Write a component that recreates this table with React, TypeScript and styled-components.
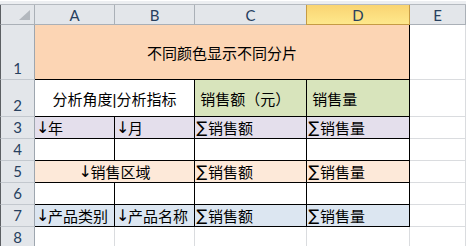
import React from 'react';
import styled, { createGlobalStyle } from 'styled-components';

const GlobalStyle = createGlobalStyle`
  html, body {
    margin: 0;
    padding: 0;
    background: #ffffff;
    overflow: hidden;
  }
`;

const Sheet = styled.div`
  width: 466px;
  height: 246px;
  overflow: hidden;
  background: #ffffff;
`;

const TopStrip = styled.div`
  height: 5px;
  box-sizing: border-box;
  background: #eceef1;
  border-top: 1px solid #ffffff;
  border-bottom: 1px solid #b5bac0;
`;

const Grid = styled.div`
  display: grid;
  grid-template-columns: 35px 80px 80px 112px 103px 1fr;
  grid-template-rows: 20px 55px 37px repeat(6, 22px);
`;

const Corner = styled.div`
  box-sizing: border-box;
  background: #e3e6ea;
  border-left: 1px solid #5c5f63;
  border-right: 1px solid #aab0b7;
  border-bottom: 1px solid #aab0b7;
  display: flex;
  align-items: flex-end;
  justify-content: flex-end;
  padding: 0 4px 4px 0;
`;

const ColHeader = styled.div<{ $selected?: boolean }>`
  box-sizing: border-box;
  position: relative;
  display: flex;
  align-items: center;
  justify-content: center;
  font-family: Lato, 'Liberation Sans', sans-serif;
  font-size: 15px;
  color: #27405e;
  background: ${p => (p.$selected ? 'linear-gradient(#f9d472, #fee88c)' : '#e3e6ea')};
  border-right: 1px solid ${p => (p.$selected ? '#c59b45' : '#aab0b7')};
  border-bottom: 1px solid ${p => (p.$selected ? '#c59b45' : '#aab0b7')};
  box-shadow: ${p => (p.$selected ? '-1px 0 0 #c59b45' : 'none')};
`;

const RowHeader = styled.div`
  box-sizing: border-box;
  display: flex;
  align-items: flex-end;
  justify-content: center;
  padding-bottom: 1px;
  font-family: Lato, 'Liberation Sans', sans-serif;
  font-size: 15px;
  line-height: 20px;
  color: #27405e;
  background: #e3e6ea;
  border-left: 1px solid #5c5f63;
  border-right: 1px solid #9ea6af;
  border-bottom: 1px solid #c3c8ce;
`;

const Cell = styled.div<{ $bg?: string; $boxed?: boolean; $span?: number; $center?: boolean }>`
  box-sizing: border-box;
  grid-column: span ${p => p.$span ?? 1};
  display: flex;
  align-items: center;
  justify-content: ${p => (p.$center ? 'center' : 'flex-start')};
  padding: 0 1px;
  white-space: nowrap;
  overflow: hidden;
  font-family: 'Liberation Sans', 'Noto Sans CJK SC', sans-serif;
  font-size: 15px;
  color: #000000;
  background: ${p => p.$bg ?? '#ffffff'};
  border-right: 1px solid ${p => (p.$boxed ? '#000000' : '#dadcdf')};
  border-bottom: 1px solid ${p => (p.$boxed ? '#000000' : '#dadcdf')};
`;

// ↓ and ∑ markers: narrow, full-height glyphs
const Sym = styled.span`
  display: inline-block;
  width: 12px;
  text-align: center;
  font-family: 'DejaVu Sans', sans-serif;
  font-size: 16px;
  color: #000000;
`;

const colors = {
  title: '#fcd5b4',
  green: '#d8e4bc',
  purple: '#e4dfec',
  peach: '#fde9d9',
  blue: '#dce6f1',
};

const SelectAll = () => (
  <svg width="11" height="10" viewBox="0 0 11 10">
    <polygon points="11,0 11,10 0,10" fill="#b3b8be" />
  </svg>
);

const Dim = ({ children }: { children: React.ReactNode }) => (
  <>
    <Sym>↓</Sym>
    {children}
  </>
);

const Sum = ({ children }: { children: React.ReactNode }) => (
  <>
    <Sym>∑</Sym>
    {children}
  </>
);

export default function App() {
  return (
    <Sheet>
      <GlobalStyle />
      <TopStrip />
      <Grid>
        <Corner>
          <SelectAll />
        </Corner>
        <ColHeader>A</ColHeader>
        <ColHeader>B</ColHeader>
        <ColHeader>C</ColHeader>
        <ColHeader $selected>D</ColHeader>
        <ColHeader>E</ColHeader>

        <RowHeader>1</RowHeader>
        <Cell $boxed $span={4} $center $bg={colors.title}>不同颜色显示不同分片</Cell>
        <Cell />

        <RowHeader>2</RowHeader>
        <Cell $boxed $span={2} $center>分析角度|分析指标</Cell>
        <Cell $boxed $bg={colors.green}>&nbsp;销售额（元）</Cell>
        <Cell $boxed $bg={colors.green}>&nbsp;销售量</Cell>
        <Cell />

        <RowHeader>3</RowHeader>
        <Cell $boxed $bg={colors.purple}><Dim>年</Dim></Cell>
        <Cell $boxed $bg={colors.purple}><Dim>月</Dim></Cell>
        <Cell $boxed $bg={colors.purple}><Sum>销售额</Sum></Cell>
        <Cell $boxed $bg={colors.purple}><Sum>销售量</Sum></Cell>
        <Cell />

        <RowHeader>4</RowHeader>
        <Cell $boxed />
        <Cell $boxed />
        <Cell $boxed />
        <Cell $boxed />
        <Cell />

        <RowHeader>5</RowHeader>
        <Cell $boxed $span={2} $center $bg={colors.peach}><Dim>销售区域</Dim></Cell>
        <Cell $boxed $bg={colors.peach}><Sum>销售额</Sum></Cell>
        <Cell $boxed $bg={colors.peach}><Sum>销售量</Sum></Cell>
        <Cell />

        <RowHeader>6</RowHeader>
        <Cell $boxed />
        <Cell $boxed />
        <Cell $boxed />
        <Cell $boxed />
        <Cell />

        <RowHeader>7</RowHeader>
        <Cell $boxed $bg={colors.blue}><Dim>产品类别</Dim></Cell>
        <Cell $boxed $bg={colors.blue}><Dim>产品名称</Dim></Cell>
        <Cell $boxed $bg={colors.blue}><Sum>销售额</Sum></Cell>
        <Cell $boxed $bg={colors.blue}><Sum>销售量</Sum></Cell>
        <Cell />

        <RowHeader>8</RowHeader>
        <Cell />
        <Cell />
        <Cell />
        <Cell />
        <Cell />
      </Grid>
    </Sheet>
  );
}
